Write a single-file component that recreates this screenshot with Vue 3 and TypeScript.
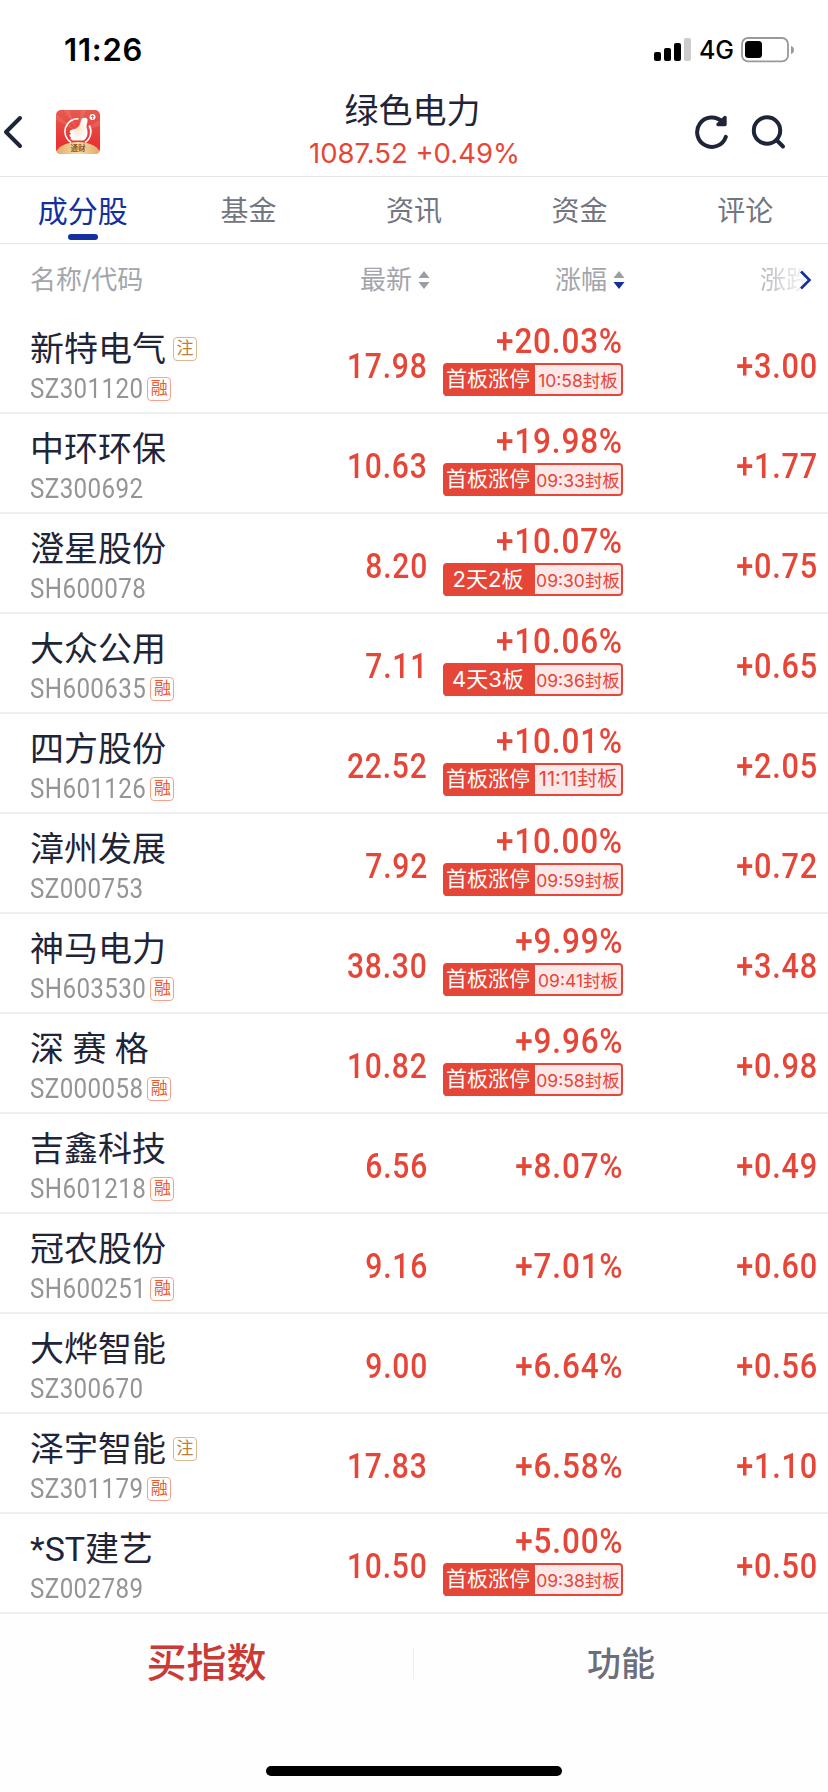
<script setup lang="ts">
interface Stock {
  name: string
  code: string
  price: string
  pct: string
  diff: string
  note?: boolean
  margin?: boolean
  tag?: string
  time?: string
}

const tabs: string[] = ['成分股', '基金', '资讯', '资金', '评论']

const stocks: Stock[] = [
  { name: '新特电气', code: 'SZ301120', price: '17.98', pct: '+20.03%', diff: '+3.00', note: true, margin: true, tag: '首板涨停', time: '10:58' },
  { name: '中环环保', code: 'SZ300692', price: '10.63', pct: '+19.98%', diff: '+1.77', tag: '首板涨停', time: '09:33' },
  { name: '澄星股份', code: 'SH600078', price: '8.20', pct: '+10.07%', diff: '+0.75', tag: '2天2板', time: '09:30' },
  { name: '大众公用', code: 'SH600635', price: '7.11', pct: '+10.06%', diff: '+0.65', margin: true, tag: '4天3板', time: '09:36' },
  { name: '四方股份', code: 'SH601126', price: '22.52', pct: '+10.01%', diff: '+2.05', margin: true, tag: '首板涨停', time: '11:11' },
  { name: '漳州发展', code: 'SZ000753', price: '7.92', pct: '+10.00%', diff: '+0.72', tag: '首板涨停', time: '09:59' },
  { name: '神马电力', code: 'SH603530', price: '38.30', pct: '+9.99%', diff: '+3.48', margin: true, tag: '首板涨停', time: '09:41' },
  { name: '深 赛 格', code: 'SZ000058', price: '10.82', pct: '+9.96%', diff: '+0.98', margin: true, tag: '首板涨停', time: '09:58' },
  { name: '吉鑫科技', code: 'SH601218', price: '6.56', pct: '+8.07%', diff: '+0.49', margin: true },
  { name: '冠农股份', code: 'SH600251', price: '9.16', pct: '+7.01%', diff: '+0.60', margin: true },
  { name: '大烨智能', code: 'SZ300670', price: '9.00', pct: '+6.64%', diff: '+0.56' },
  { name: '泽宇智能', code: 'SZ301179', price: '17.83', pct: '+6.58%', diff: '+1.10', note: true, margin: true },
  { name: '*ST建艺', code: 'SZ002789', price: '10.50', pct: '+5.00%', diff: '+0.50', tag: '首板涨停', time: '09:38' },
]
</script>

<template>
  <div class="screen">
    <div class="status">
      <span class="clock">11:26</span>
      <div class="signals">
        <svg width="38" height="24" viewBox="0 0 38 24">
          <rect x="0" y="14" width="7" height="9" rx="2" />
          <rect x="10" y="10" width="7" height="13" rx="2" />
          <rect x="20" y="5" width="7" height="18" rx="2" />
          <rect x="30" y="0" width="7" height="23" rx="2" fill="#ccc" />
        </svg>
        <span class="net">4G</span>
        <svg class="battery" width="54" height="26" viewBox="0 0 54 26">
          <rect x="1" y="1" width="46" height="23.4" rx="6" fill="none" stroke="#999" stroke-width="1.8" />
          <rect x="4" y="4" width="17" height="17" rx="3.5" />
          <path d="M50 9c4 1 4 7 0 8z" fill="#999" />
        </svg>
      </div>
    </div>

    <header class="head">
      <div class="side">
        <svg class="back" width="20" height="36" viewBox="0 0 20 36">
          <path d="M17 4 3 18l14 14" fill="none" stroke="#1f2538" stroke-width="4" stroke-linecap="round" stroke-linejoin="round" />
        </svg>
        <svg class="logo" width="44" height="44" viewBox="0 0 44 44">
          <defs>
            <clipPath id="logoClip"><rect width="44" height="44" rx="5" /></clipPath>
            <linearGradient id="logoRed" x1="0" y1="0" x2="0" y2="1">
              <stop offset="0" stop-color="#e75a4d" />
              <stop offset="0.75" stop-color="#e93434" />
            </linearGradient>
            <linearGradient id="logoGold" x1="0" y1="0" x2="1" y2="0">
              <stop offset="0" stop-color="#e2aa66" />
              <stop offset="0.5" stop-color="#f7dda6" />
              <stop offset="1" stop-color="#e2aa66" />
            </linearGradient>
            <radialGradient id="hand"><stop offset="0" stop-color="#fde3cf" /><stop offset="1" stop-color="#fff" /></radialGradient>
          </defs>
          <g clip-path="url(#logoClip)">
            <rect width="44" height="44" fill="url(#logoRed)" />
            <path d="M22 22 0 4v6zM22 22 8 0h5zM22 22 25 0h5zM22 22 44 10v6z" fill="#fff" opacity=".1" />
            <path d="M22.500 8.800A12.800 12.800 0 0 0 15 32.500M29 32.500A12.800 12.800 0 0 0 33.300 15.500" fill="none" stroke="#fff" stroke-width="1.600" />
            <path d="M15 20c2-1 5-1 7-3 3-2 2-6 4-8.500 2-1.500 5-1 5.500 1 .5 3-1.500 5-1 8 2 5 1 11-3 13H18c-3 0-4-2-3-3-2-1-2-3 0-4-2-1-1.500-2.500 0-3.500z" fill="url(#hand)" />
            <circle cx="36.500" cy="7" r="3" fill="#fff" />
            <path d="M36.500 9V5.500M35 7l1.500-1.500L38 7" stroke="#e75a4d" stroke-width=".9" fill="none" />
            <ellipse cx="22" cy="44" rx="22" ry="12" fill="url(#logoGold)" />
            <text x="22" y="41.300" text-anchor="middle" class="logo-text">通财</text>
          </g>
        </svg>
      </div>
      <div class="titles">
        <h1>绿色电力</h1>
        <p>1087.52 +0.49%</p>
      </div>
      <div class="actions">
        <svg width="36" height="38" viewBox="0 0 36 38">
          <path d="M31.800 23.800A14.700 14.700 0 1 1 28 8.500" fill="none" stroke="#1f2538" stroke-width="4" stroke-linecap="round" />
          <path d="M31 4.500V11.500H24L27 8.500z" fill="#1f2538" stroke="#1f2538" stroke-width="3.400" stroke-linejoin="round" />
        </svg>
        <svg width="38" height="38" viewBox="0 0 38 38">
          <circle cx="17" cy="17.500" r="13.200" fill="none" stroke="#1f2538" stroke-width="4" />
          <path d="m26.500 27 6.500 6.500" stroke="#1f2538" stroke-width="4" stroke-linecap="round" />
        </svg>
      </div>
    </header>

    <nav class="tabs">
      <div v-for="(t, i) in tabs" :key="t" class="tab" :class="{ active: i === 0 }">
        <span>{{ t }}</span>
      </div>
    </nav>

    <div class="cols">
      <span class="c-name">名称/代码</span>
      <span class="c-price">最新
        <svg class="sort" width="12" height="18" viewBox="0 0 12 18"><path d="M6 0 11.500 7H.5zM6 18 .5 11h11z" fill="#9b9da4" /></svg>
      </span>
      <span class="c-pct">涨幅
        <svg class="sort" width="12" height="18" viewBox="0 0 12 18"><path d="M6 0 11.500 7H.5z" fill="#9b9da4" /><path d="M6 18 .5 11h11z" fill="#142fa0" /></svg>
      </span>
      <span class="c-diff"><span class="fade">涨跌</span>
        <svg class="more" width="14" height="22" viewBox="0 0 14 22"><path d="m3 2.500 8.500 8.500L3 19.500" fill="none" stroke="#142fa0" stroke-width="2.600" /></svg>
      </span>
    </div>

    <main class="list">
      <div v-for="s in stocks" :key="s.code" class="row">
        <div class="ident">
          <div class="name-line">
            <span class="name">{{ s.name }}</span>
            <span v-if="s.note" class="chip note">注</span>
          </div>
          <div class="code-line">
            <span class="code">{{ s.code }}</span>
            <span v-if="s.margin" class="chip margin">融</span>
          </div>
        </div>
        <span class="num price">{{ s.price }}</span>
        <div class="pct" :class="{ tagged: s.tag }">
          <span class="num">{{ s.pct }}</span>
          <div v-if="s.tag" class="limit">
            <span class="kind" :class="{ streak: s.tag.includes('天') }">{{ s.tag }}</span>
            <span class="time" :class="{ roomy: s.time === '11:11' }">{{ s.time }}封板</span>
          </div>
        </div>
        <span class="num diff">{{ s.diff }}</span>
      </div>
    </main>

    <footer class="foot">
      <div class="buttons">
        <span class="buy">买指数</span>
        <span class="func">功能</span>
      </div>
      <div class="home"></div>
    </footer>
  </div>
</template>

<style>
body {
  margin: 0;
  background: #fff;
}
</style>

<style scoped>
.screen {
  width: 828px;
  height: 1792px;
  overflow: hidden;
  display: flex;
  flex-direction: column;
  background: #fff;
  color: #1f2538;
  font-family: Inter, "Noto Sans CJK SC", sans-serif;
}
.screen * {
  box-sizing: border-box;
}
svg {
  display: block;
  flex: none;
}
.status {
  height: 88px;
  padding: 11px 33px 0 64px;
  display: flex;
  align-items: center;
  justify-content: space-between;
  color: #000;
}
.clock {
  font-size: 31px;
  font-weight: 600;
  letter-spacing: 0.8px;
}
.signals {
  display: flex;
  align-items: center;
}
.net {
  margin: 0 7px;
  font-size: 25px;
  font-weight: 500;
  line-height: 26px;
}
.head {
  height: 89px;
  border-bottom: 1px solid #e6e6e8;
  display: grid;
  grid-template-columns: 250px 1fr 250px;
}
.side {
  display: flex;
  align-items: center;
  padding-left: 3px;
}
.logo {
  margin-left: 33px;
}
.logo-text {
  font-size: 7.5px;
  font-weight: 700;
  fill: #8a5a26;
}
.titles {
  text-align: center;
}
h1 {
  margin: 0;
  padding-right: 3px;
  font-size: 34px;
  font-weight: 400;
  line-height: 45px;
}
.titles p {
  margin: 0;
  padding-left: 1px;
  color: #e54638;
  font-size: 27.5px;
  line-height: 41px;
  white-space: nowrap;
}
.actions {
  display: flex;
  align-items: center;
  gap: 20px;
  padding-left: 116px;
}
.tabs {
  height: 67px;
  display: grid;
  grid-template-columns: repeat(5, 1fr);
  border-bottom: 1px solid #e6e6e8;
}
.tab {
  display: flex;
  flex-direction: column;
  align-items: center;
  font-size: 28px;
  line-height: 68px;
  color: #737580;
}
.active {
  font-size: 30px;
  color: #142fa0;
}
.active span {
  height: 57px;
}
.active::after {
  content: "";
  width: 30px;
  height: 6px;
  border-radius: 3px;
  background: #142fa0;
}
.cols {
  height: 70px;
  padding: 2px 0 0 30px;
  display: grid;
  grid-template-columns: 330px 195px 205px 1fr;
  align-items: center;
  color: #a3a5ac;
  font-size: 26px;
  line-height: 40px;
}
.cols > span {
  display: flex;
  align-items: center;
}
.sort {
  margin-left: 6px;
}
.fade {
  background: linear-gradient(90deg, #b4b5ba, #fff);
  background-clip: text;
  -webkit-background-clip: text;
  color: transparent;
}
.more {
  margin-left: -14px;
}
.row {
  height: 100px;
  border-bottom: 2px solid #eeeeef;
  padding-left: 30px;
  display: grid;
  grid-template-columns: 200px 197px 195px 195px;
  align-items: center;
}
.row > .num {
  justify-self: end;
  margin-top: 5px;
}
.ident {
  padding-top: 8px;
}
.name-line,
.code-line {
  display: flex;
  align-items: center;
  white-space: nowrap;
}
.name-line {
  height: 44px;
  gap: 7px;
}
.name {
  font-family: Roboto, "Noto Sans CJK SC", sans-serif;
  font-size: 34px;
  line-height: 44px;
}
.code-line {
  height: 36px;
}
.code {
  font-family: Roboto, sans-serif;
  font-size: 27px;
  font-weight: 450;
  letter-spacing: 0.45px;
  color: #959595;
  transform: scaleX(0.895);
  transform-origin: left;
  margin-right: -9.5px;
}
.chip {
  width: 24px;
  height: 24px;
  border: 1px solid;
  border-radius: 4px;
  font-size: 17px;
  line-height: 21px;
  text-align: center;
}
.note {
  color: #b87f3d;
  border-color: #d9b88e;
}
.margin {
  color: #ee5a32;
  border-color: #f4a48d;
}
.num {
  font-family: Roboto, sans-serif;
  font-size: 34.5px;
  font-weight: 500;
  line-height: 40px;
  letter-spacing: 0.9px;
  margin-right: -0.9px;
  color: #e54638;
  transform: scaleX(0.913);
  transform-origin: right;
  white-space: nowrap;
}
.price {
  transform: scaleX(0.87);
}
.diff {
  transform: scaleX(0.89);
}
.pct {
  display: flex;
  flex-direction: column;
  align-items: flex-end;
  padding-top: 5px;
}
.tagged {
  padding-top: 0;
  margin-top: -9px;
}
.limit {
  width: 180px;
  height: 33px;
  margin-right: -1px;
  margin-top: 2px;
  border: 2px solid #e54638;
  border-radius: 4px;
  display: grid;
  grid-template-columns: 90px 1fr;
  background: #fbe8e8;
  line-height: 28px;
  white-space: nowrap;
}
.kind {
  background: #e54638;
  color: #fff;
  font-size: 21px;
  padding-right: 4px;
  text-align: center;
}
.streak {
  font-size: 22px;
}
.time {
  color: #e54638;
  font-size: 17.5px;
  line-height: 31px;
  text-align: center;
}
.roomy {
  font-size: 20px;
  line-height: 29px;
}
.foot {
  flex: 1;
  display: flex;
  flex-direction: column;
  align-items: center;
  justify-content: space-between;
  padding-bottom: 16px;
  background: #fefefe;
}
.buttons {
  width: 100%;
  height: 98px;
  display: grid;
  grid-template-columns: 1fr 1fr;
  align-items: center;
  text-align: center;
}
.buy {
  height: 32px;
  line-height: 32px;
  border-right: 1px solid #eeeff4;
  color: #cb3a35;
  font-size: 40px;
  font-weight: 500;
}
.func {
  padding-bottom: 4px;
  color: #6b6e7b;
  font-size: 34px;
  font-weight: 500;
}
.home {
  width: 296px;
  height: 10px;
  border-radius: 5px;
  background: #000;
}
</style>
